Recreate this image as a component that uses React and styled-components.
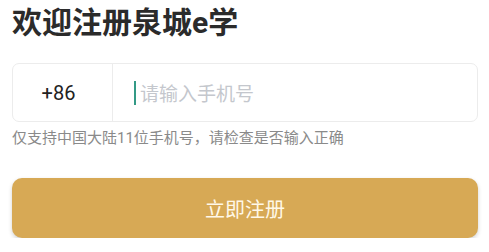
import React from 'react';
import styled, { createGlobalStyle } from 'styled-components';

const Global = createGlobalStyle`
  html, body {
    margin: 0;
    padding: 0;
    background: #fff;
    font-family: Roboto, "Noto Sans CJK SC", "Noto Sans", sans-serif;
  }
`;

const Page = styled.div`
  width: 489px;
  padding: 0 11px 0 12px;
  box-sizing: border-box;
`;

const Title = styled.h1`
  margin: 0;
  padding-top: 5px;
  font-size: 30px;
  line-height: 36px;
  font-weight: 700;
  color: #2b2b2b;
`;

const PhoneBox = styled.div`
  margin-top: 22px;
  height: 59px;
  display: flex;
  align-items: stretch;
  border: 1px solid #ececec;
  border-radius: 7px;
  box-sizing: border-box;
`;

const AreaCode = styled.div`
  width: 100px;
  padding-right: 8px;
  box-sizing: border-box;
  display: flex;
  align-items: center;
  justify-content: center;
  border-right: 1px solid #ececec;
  font-size: 20px;
  color: #222;
`;

const Field = styled.div`
  flex: 1;
  display: flex;
  align-items: center;
  padding-left: 21px;
`;

const Caret = styled.span`
  width: 2px;
  height: 24px;
  margin-right: 4px;
  background: #349a86;
`;

const Placeholder = styled.span`
  font-size: 19px;
  color: #c4c7cd;
`;

const Hint = styled.p`
  margin: 4px 0 0;
  font-size: 15px;
  line-height: 24px;
  color: #8a8a8a;
`;

const Submit = styled.button`
  margin-top: 28px;
  width: 100%;
  height: 60px;
  border: none;
  border-radius: 10px;
  background: #d7a955;
  box-shadow: 0 2px 4px rgba(0, 0, 0, 0.18);
  color: #fff8e8;
  font-family: inherit;
  font-size: 20px;
  cursor: pointer;
`;

export default function App() {
  return (
    <Page>
      <Global />
      <Title>欢迎注册泉城e学</Title>
      <PhoneBox>
        <AreaCode>+86</AreaCode>
        <Field>
          <Caret />
          <Placeholder>请输入手机号</Placeholder>
        </Field>
      </PhoneBox>
      <Hint>仅支持中国大陆11位手机号，请检查是否输入正确</Hint>
      <Submit>立即注册</Submit>
    </Page>
  );
}
